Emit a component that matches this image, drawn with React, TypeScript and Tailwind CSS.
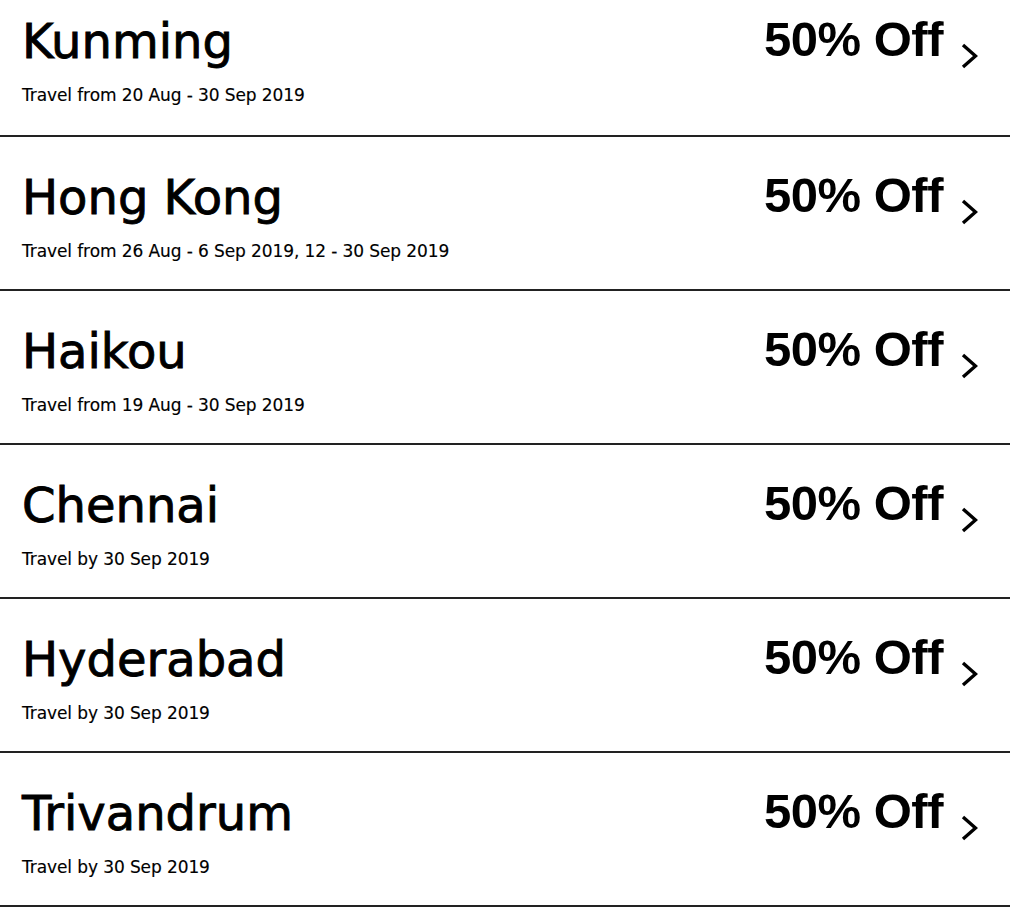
const offers = [
  { city: "Kunming", period: "Travel from 20 Aug - 30 Sep 2019" },
  { city: "Hong Kong", period: "Travel from 26 Aug - 6 Sep 2019, 12 - 30 Sep 2019" },
  { city: "Haikou", period: "Travel from 19 Aug - 30 Sep 2019" },
  { city: "Chennai", period: "Travel by 30 Sep 2019" },
  { city: "Hyderabad", period: "Travel by 30 Sep 2019" },
  { city: "Trivandrum", period: "Travel by 30 Sep 2019" },
];

function Chevron() {
  return (
    <svg width="17" height="26" viewBox="0 0 17 26" fill="none" className="mt-[29px] ml-[18px] shrink-0">
      <path d="M2 2 L14.5 13 L2 24" stroke="#000" strokeWidth="3.4" strokeLinecap="butt" strokeLinejoin="miter" />
    </svg>
  );
}

export default function App() {
  return (
    <div className="min-h-[917px] w-full bg-white text-black overflow-hidden">
      <div className="w-[1010px]">
        {offers.map((o, i) => (
          <div
            key={o.city}
            className={`flex justify-between border-b-2 border-[#222] pl-[22px] pr-[32px] ${i === 0 ? "h-[137px] pt-[14px]" : "h-[154px] pt-[33px]"}`}
          >
            <div className="flex flex-col">
              <div className="mt-[3px] font-['DejaVu_Sans',sans-serif] text-[48px] leading-[48px] [-webkit-text-stroke:0.9px_black]">{o.city}</div>
              <div className="mt-[20px] font-['DejaVu_Sans',sans-serif] text-[17px] leading-[20px] tracking-[-0.1px] [-webkit-text-stroke:0.15px_black]">{o.period}</div>
            </div>
            <div className="flex items-start">
              <div className="font-['Liberation_Sans',sans-serif] font-bold text-[49px] leading-[50px] tracking-[-0.5px]">50% Off</div>
              <Chevron />
            </div>
          </div>
        ))}
      </div>
    </div>
  );
}
